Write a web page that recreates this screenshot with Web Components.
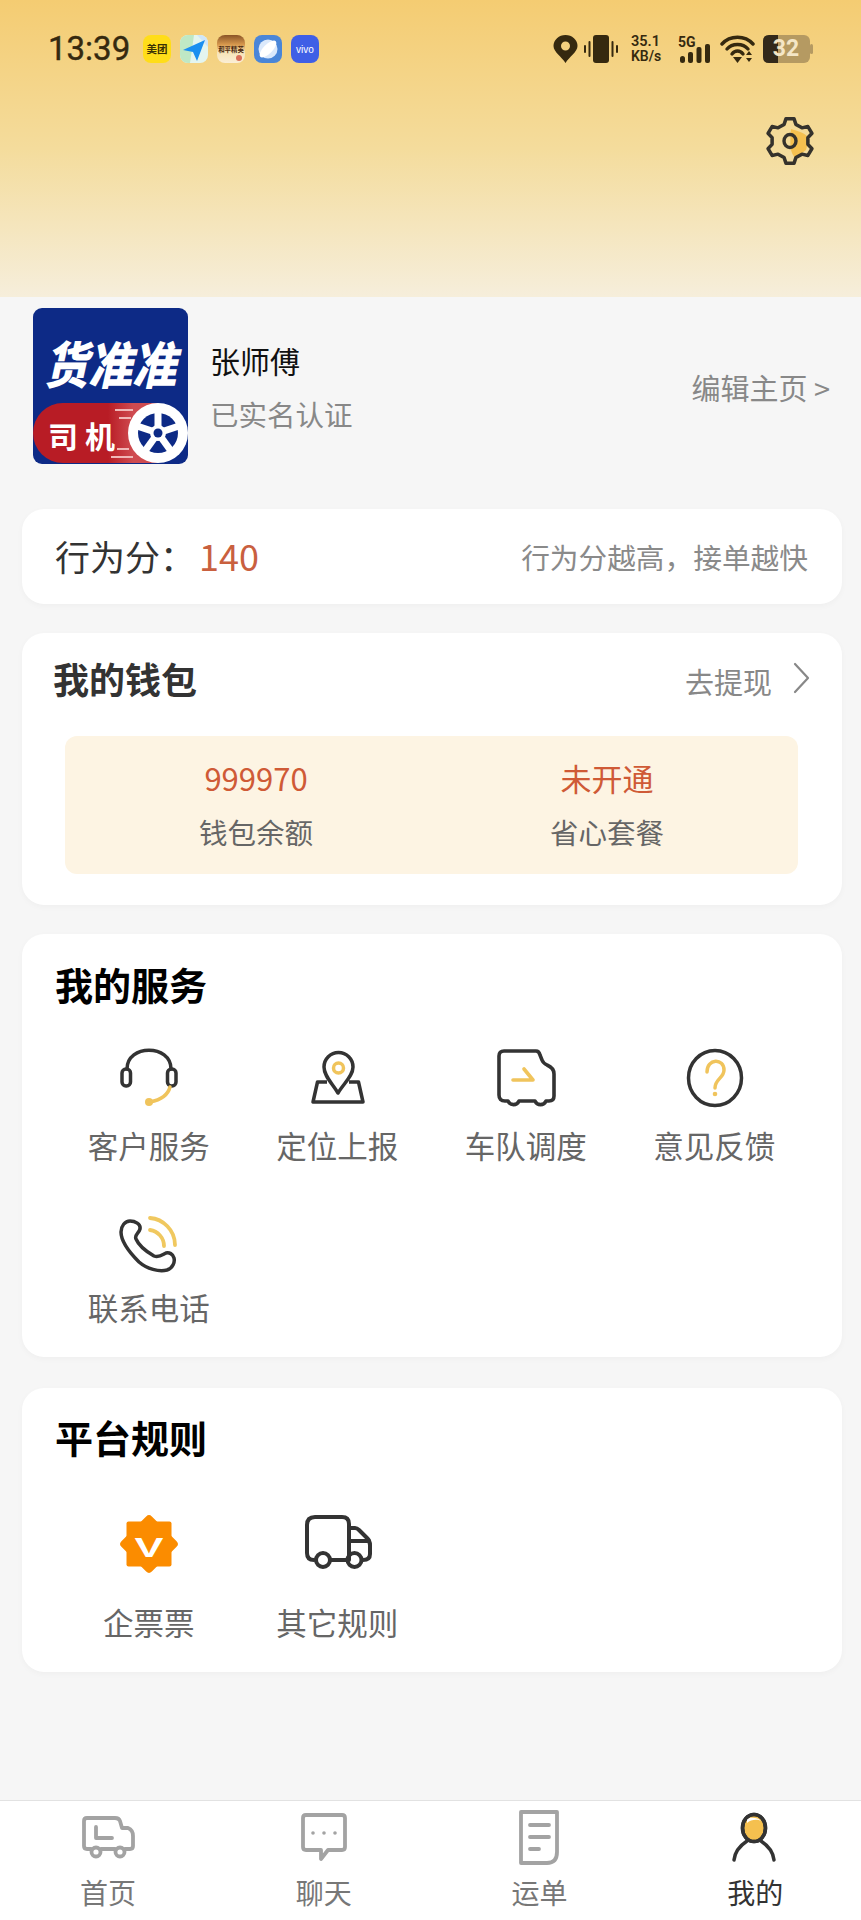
<!DOCTYPE html>
<html lang="zh-CN">
<head>
<meta charset="utf-8">
<title>我的</title>
<style>
  html, body { margin: 0; padding: 0; }
  body {
    width: 861px;
    height: 1920px;
    overflow: hidden;
    background: #f6f6f6;
    font-family: "Noto Sans CJK SC", "Noto Sans", sans-serif;
  }
</style>
</head>
<body>

<top-header></top-header>
<profile-row name="张师傅" status="已实名认证" action="编辑主页 >"></profile-row>
<score-card label="行为分：" value="140" hint="行为分越高，接单越快"></score-card>
<wallet-card></wallet-card>

<grid-card title="我的服务" class="services">
  <service-item label="客户服务">
    <svg slot="icon" width="64" height="64" viewBox="0 0 64 64" fill="none" stroke-linecap="round">
      <path d="M10 23C10 -2 54 -2 54 23" stroke="#333" stroke-width="3.500"/>
      <rect x="5" y="23" width="8.500" height="17" rx="4" stroke="#333" stroke-width="3.500"/>
      <rect x="50.500" y="23" width="8.500" height="17" rx="4" stroke="#333" stroke-width="3.500"/>
      <path d="M53 41C51 49 43 54 33 56" stroke="#f0c45c" stroke-width="3.500"/>
      <circle cx="32" cy="56" r="4" fill="#f0c45c"/>
    </svg>
  </service-item>
  <service-item label="定位上报">
    <svg slot="icon" width="64" height="64" viewBox="0 0 64 64" fill="none" stroke-linejoin="round">
      <path d="M32 47C26 37 18 30 18 21A14.500 14.500 0 0 1 47 21C47 30 38 37 32 47Z" stroke="#333" stroke-width="3.500"/>
      <circle cx="32.500" cy="22" r="5" stroke="#f0c45c" stroke-width="3.500"/>
      <path d="M21 36H11.500L7 56H57L52.500 36H43" stroke="#333" stroke-width="3.500"/>
    </svg>
  </service-item>
  <service-item label="车队调度">
    <svg slot="icon" width="64" height="64" viewBox="0 0 64 64" fill="none" stroke-linecap="round" stroke-linejoin="round">
      <path d="M10 5H42Q45 5 46 9L48 14Q49 17 53 19Q60 22 60 28V50Q60 55 55 55H52A6 6 0 0 1 41 55H25A6 6 0 0 1 14 55H11Q5 55 5 49V10Q5 5 10 5Z" stroke="#333" stroke-width="3.600"/>
      <path d="M19 34H39L30 23" stroke="#f0c45c" stroke-width="3.600"/>
    </svg>
  </service-item>
  <service-item label="意见反馈">
    <svg slot="icon" width="64" height="64" viewBox="0 0 64 64" fill="none" stroke-linecap="round">
      <ellipse cx="32" cy="32" rx="26.500" ry="27.500" stroke="#333" stroke-width="3.500"/>
      <path d="M24 26C24 12 41 12 41 24C41 32 32 33 32 42" stroke="#f0c45c" stroke-width="3.500"/>
      <circle cx="32" cy="48" r="2.300" fill="#f0c45c"/>
    </svg>
  </service-item>
  <service-item label="联系电话">
    <svg slot="icon" width="64" height="64" viewBox="0 0 64 64" fill="none" stroke-linecap="round" style="overflow:visible">
      <path d="M13 13C8 13 4 18 4 24C4 34 14 46 22 54C30 61 42 64 50 62C56 60 58 54 57 50C56 46 52 44 49 45C45 47 42 50 37 48C30 44 22 38 19 31C17 27 22 25 23 21C24 16 18 13 13 13Z" stroke="#333" stroke-width="3.500"/>
      <path d="M33 10C46 11 58 22 58 37" stroke="#f0c85f" stroke-width="3.800"/>
      <path d="M33 22C41 23 47 30 47 38" stroke="#f0c85f" stroke-width="3.800"/>
    </svg>
  </service-item>
</grid-card>

<grid-card title="平台规则" class="rules">
  <service-item label="企票票" style="--label-gap:26px">
    <svg slot="icon" width="64" height="64" viewBox="0 0 64 64">
      <g fill="#fb8c00">
        <rect x="9.500" y="9.500" width="45" height="45" rx="2"/>
        <rect x="10.500" y="10.500" width="43" height="43" rx="4" transform="rotate(45 32 32)"/>
      </g>
      <text transform="translate(32 45) scale(1.550 1)" text-anchor="middle" font-family="Liberation Sans, sans-serif" font-weight="700" font-size="28" fill="#fff">V</text>
    </svg>
  </service-item>
  <service-item label="其它规则" style="--label-gap:26px">
    <svg slot="icon" width="68" height="64" viewBox="0 0 68 64" fill="none" stroke="#333" stroke-width="4" stroke-linecap="round" stroke-linejoin="round">
      <path d="M10 48Q3 48 3 41V13Q3 5 11 5H38Q45 5 45 12V48M27 48H42"/>
      <path d="M45 16H51Q53 16 55 18L63 26Q66 29 66 33V42Q66 48 59 48"/>
      <path d="M45 29H65"/>
      <circle cx="19" cy="48" r="7"/>
      <circle cx="50.500" cy="48" r="7"/>
    </svg>
  </service-item>
</grid-card>

<bottom-nav></bottom-nav>

<script>
// Shared font stack, shadow roots don't see the page rules except through inheritance
const pageFont = '"Noto Sans CJK SC", "Noto Sans", sans-serif';

class StatusBar extends HTMLElement {
  constructor() {
    super();
    const template = document.createElement('template');
    template.innerHTML = `
      <style>
        :host { display: flex; align-items: center; height: 28px; padding: 0 48px; color: #35290f; font-family: ${pageFont}; }
        svg { display: block; flex: none; }
        .time { width: 81px; font: 400 33px/28px Roboto, "Liberation Sans", sans-serif; -webkit-text-stroke: .4px #35290f; margin-right: 14px; white-space: nowrap; }
        .apps { display: flex; gap: 9px; }
        .apps svg { border-radius: 8px; }
        .right { display: flex; align-items: center; margin-left: auto; }
        .speed { width: 33px; margin: 0 14px 0 13px; font: 600 14.500px/14px Roboto, "Liberation Sans", sans-serif; white-space: nowrap; }
        .speed div:last-child { font-size: 14px; }
        .signal { width: 34px; height: 28px; position: relative; margin-right: 8px; }
        .signal span { position: absolute; left: 0; top: 0; font: 700 14px/14px Roboto, "Liberation Sans", sans-serif; }
        .signal svg { position: absolute; left: 0; top: 0; }
        .battery { width: 50px; height: 28px; position: relative; margin-left: 8px; }
        .battery span { position: absolute; left: 8px; top: 0; width: 30px; text-align: center; font: 700 23px/28px Roboto, "Liberation Sans", sans-serif; color: #f4e6c6; }
      </style>
      <div class="time">13:39</div>
      <div class="apps">
        <svg width="28" height="28" viewBox="0 0 28 28"><rect width="28" height="28" fill="#ffdd19"/><text x="14" y="18" text-anchor="middle" font-size="10.500" font-weight="700" fill="#3b3205">美团</text></svg>
        <svg width="28" height="28" viewBox="0 0 28 28"><rect width="28" height="28" fill="#e4f5ef"/><path d="M0 0H14L10 28H0Z" fill="#bfe8c5"/><path d="M17 0H28V12Z" fill="#cfe6f8"/><path d="M25 5L3 15L13 17L17 26Z" fill="#1a8ff0"/></svg>
        <svg width="28" height="28" viewBox="0 0 28 28"><defs><linearGradient id="pg" x1="0" y1="0" x2="0" y2="1"><stop offset="0" stop-color="#8a5426"/><stop offset=".35" stop-color="#d99a4e"/><stop offset=".6" stop-color="#f6e3b6"/><stop offset="1" stop-color="#fbeed6"/></linearGradient></defs><rect width="28" height="28" fill="url(#pg)"/><text x="14" y="17" text-anchor="middle" font-size="6.400" font-weight="700" fill="#4a2a10">和平精英</text><circle cx="22" cy="23" r="3" fill="#d9705a"/></svg>
        <svg width="28" height="28" viewBox="0 0 28 28"><rect width="28" height="28" fill="#4a86d8"/><circle cx="14" cy="14" r="9.500" fill="#dbe9fb"/><ellipse cx="14" cy="14" rx="11" ry="4.500" fill="#fff" transform="rotate(-45 14 14)"/></svg>
        <svg width="28" height="28" viewBox="0 0 28 28"><rect width="28" height="28" fill="#3f5fe6"/><text x="14" y="18" text-anchor="middle" font-family="Liberation Sans, sans-serif" font-size="10" fill="#fff">vivo</text></svg>
      </div>
      <div class="right">
        <svg width="25" height="28" viewBox="0 0 25 28"><path fill-rule="evenodd" fill="#35290f" d="M12.500 28C9 22 .5 17 .5 11A12 11 0 0 1 24.500 11C24.500 17 16 22 12.500 28ZM12.500 6.500A4.500 4.500 0 1 0 12.500 15.500A4.500 4.500 0 1 0 12.500 6.500Z"/></svg>
        <svg width="34" height="28" viewBox="0 0 34 28" style="margin-left:6px" fill="#35290f"><rect x="9" y="0" width="16" height="28" rx="3"/><rect x="0" y="10" width="2" height="8" rx="1"/><rect x="4.500" y="6" width="2" height="16" rx="1"/><rect x="27.500" y="6" width="2" height="16" rx="1"/><rect x="32" y="10" width="2" height="8" rx="1"/></svg>
        <div class="speed"><div>35.1</div><div>KB/s</div></div>
        <div class="signal">
          <span>5G</span>
          <svg width="34" height="28" viewBox="0 0 34 28" fill="#35290f"><rect x="2" y="21" width="5" height="7" rx="2.500"/><rect x="10" y="17" width="5" height="11" rx="2"/><rect x="18.500" y="12" width="5" height="16" rx="2"/><rect x="27" y="9" width="5" height="19" rx="2"/></svg>
        </div>
        <svg width="35" height="28" viewBox="0 0 35 28" fill="none" stroke="#35290f" stroke-width="3.400" stroke-linecap="round"><path d="M2 9C10 0 25 0 33 9"/><path d="M7 14C12 8 23 8 28 14"/><path d="M12 19C15 15 20 15 23 19" /><path d="M13 22H22L17.500 28Z" fill="#35290f" stroke="none"/><path d="M26 20L29 16L32 20ZM26 23L29 27L32 23Z" fill="#35290f" stroke="none"/></svg>
        <div class="battery">
          <svg width="50" height="28" viewBox="0 0 50 28"><rect x="0" y="0" width="47" height="28" rx="6" fill="#b59a62"/><path d="M6 0H15V28H6Q0 28 0 22V6Q0 0 6 0Z" fill="#33291a"/><rect x="47" y="9" width="3" height="10" rx="1.500" fill="#b59a62"/></svg>
          <span>32</span>
        </div>
      </div>
    `;
    this.attachShadow({ mode: 'open' });
    this.shadowRoot.appendChild(template.content.cloneNode(true));
  }
}
customElements.define('status-bar', StatusBar);

class SettingsGear extends HTMLElement {
  constructor() {
    super();
    // six teeth, worked out instead of typed by hand
    const cx = 24, cy = 24;
    let d = '';
    for (let i = 0; i < 6; i++) {
      const a = (-90 + 60 * i) * Math.PI / 180;
      const pts = [[17.500, -19], [22.500, -10], [22.500, 10], [17.500, 19]];
      pts.forEach((p, j) => {
        const t = a + p[1] * Math.PI / 180;
        d += ((i === 0 && j === 0) ? 'M' : 'L') + (cx + p[0] * Math.cos(t)).toFixed(1) + ' ' + (cy + p[0] * Math.sin(t)).toFixed(1);
      });
    }
    d += 'Z';
    this.attachShadow({ mode: 'open' }).innerHTML = `
      <style>
        :host { display: block; width: 48px; height: 48px; }
        svg { display: block; overflow: visible; }
      </style>
      <svg width="48" height="48" viewBox="0 0 48 48" fill="none">
        <path d="M25 12C31 14 41 16 43 22L40 33L29 41C26 36 23 34 25 12Z" fill="#f5c04f"/>
        <path d="${d}" transform="translate(24 24) scale(1.040 1) translate(-24 -24)" stroke="#35322c" stroke-width="3.400" stroke-linejoin="round"/>
        <ellipse cx="24" cy="24" rx="6" ry="6.500" stroke="#35322c" stroke-width="3.400"/>
      </svg>
    `;
  }
}
customElements.define('settings-gear', SettingsGear);

class TopHeader extends HTMLElement {
  constructor() {
    super();
    this.attachShadow({ mode: 'open' }).innerHTML = `
      <style>
        :host { display: block; height: 297px; padding-top: 35px; box-sizing: border-box; background: linear-gradient(#f4cc72, #f4dc9c 50%, #f6eedb); }
        .tools { display: flex; justify-content: flex-end; padding: 54px 47px 0 0; }
      </style>
      <status-bar></status-bar>
      <div class="tools"><settings-gear></settings-gear></div>
    `;
  }
}
customElements.define('top-header', TopHeader);

class ProfileRow extends HTMLElement {
  connectedCallback() {
    this.attachShadow({ mode: 'open' }).innerHTML = `
      <style>
        :host { display: flex; align-items: center; margin-top: 11px; padding: 0 31px 0 33px; height: 156px; font-family: ${pageFont}; }
        svg { display: block; flex: none; }
        .who { margin-left: 22px; align-self: flex-start; padding-top: 30px; }
        .name { font-size: 30px; line-height: 44px; color: #111; }
        .status { font-size: 28.500px; line-height: 40px; color: #888; margin-top: 12px; }
        .action { margin-left: auto; margin-top: 2px; font-size: 29px; line-height: 40px; color: #888; }
      </style>
      <svg width="155" height="156" viewBox="0 0 155 156">
        <defs>
          <clipPath id="round"><rect width="155" height="156" rx="9"/></clipPath>
          <linearGradient id="fade" x1="0" y1="0" x2="1" y2="0"><stop offset=".6" stop-color="#b81c25"/><stop offset=".8" stop-color="#cf4b50"/></linearGradient>
        </defs>
        <g clip-path="url(#round)">
          <rect width="155" height="156" fill="#0d2a86"/>
          <path d="M30 95H125V155H30A30 30 0 0 1 30 95Z" fill="url(#fade)"/>
          <g stroke="#f0b7b7" stroke-width="2"><path d="M82 102H100"/><path d="M86 110H98"/><path d="M84 141H96"/><path d="M78 149H100"/></g>
          <circle cx="125" cy="125" r="30" fill="#fff"/>
          <circle cx="125" cy="125" r="20" fill="#0d2a86"/>
          <g stroke="#fff" stroke-width="7">
            <path d="M125 125V103"/><path d="M125 125L146 118"/><path d="M125 125L138 143"/><path d="M125 125L112 143"/><path d="M125 125L104 118"/>
          </g>
          <circle cx="125" cy="125" r="8" fill="#fff"/>
          <circle cx="125" cy="125" r="4.500" fill="#0d2a86"/>
        </g>
        <text transform="translate(11 76) scale(1 1.150)" font-style="italic" font-size="44" font-weight="900" fill="#fff">货准准</text>
        <text x="15" y="140" font-size="30" font-weight="700" letter-spacing="7" fill="#fff">司机</text>
      </svg>
      <div class="who">
        <div class="name">${this.getAttribute('name')}</div>
        <div class="status">${this.getAttribute('status')}</div>
      </div>
      <div class="action">${this.getAttribute('action').replace('>', '&gt;')}</div>
    `;
  }
}
customElements.define('profile-row', ProfileRow);

class ScoreCard extends HTMLElement {
  connectedCallback() {
    this.attachShadow({ mode: 'open' }).innerHTML = `
      <style>
        :host { display: flex; align-items: center; box-sizing: border-box; width: 820px; height: 95px; margin: 45px 0 0 22px; padding: 0 34px 2px 33px; background: #fff; border-radius: 22px; box-shadow: 0 2px 6px rgba(0,0,0,.03); font-family: ${pageFont}; }
        .label { font-size: 35px; color: #333; width: 144px; white-space: nowrap; }
        .value { font-size: 36px; color: #c9603f; margin-bottom: 2px; }
        .hint { margin-left: auto; margin-top: 2px; font-size: 28.700px; color: #8a8a8a; white-space: nowrap; }
      </style>
      <span class="label">${this.getAttribute('label')}</span>
      <span class="value">${this.getAttribute('value')}</span>
      <span class="hint">${this.getAttribute('hint')}</span>
    `;
  }
}
customElements.define('score-card', ScoreCard);

class WalletCard extends HTMLElement {
  constructor() {
    super();
    this.attachShadow({ mode: 'open' }).innerHTML = `
      <style>
        :host { display: block; box-sizing: border-box; width: 820px; height: 272px; margin: 29px 0 0 22px; background: #fff; border-radius: 22px; box-shadow: 0 2px 6px rgba(0,0,0,.03); font-family: ${pageFont}; }
        .head { display: flex; align-items: center; height: 94px; padding: 0 32px 0 31px; }
        .title { font-size: 36px; font-weight: 700; color: #333; margin-top: -4px; }
        .link { margin-left: auto; margin-top: 2px; font-size: 29px; color: #888; }
        svg { display: block; margin-left: 21px; margin-top: -4px; }
        .box { display: grid; grid-template-columns: 382px 320px; height: 138px; margin: 9px 44px 0 43px; padding-top: 18px; box-sizing: border-box; background: #fdf4e3; border-radius: 12px; text-align: center; }
        .val { font-size: 31px; line-height: 48px; color: #cf5a36; }
        .cap { font-size: 28.500px; line-height: 40px; margin-top: 10px; color: #666; }
      </style>
      <div class="head">
        <span class="title">我的钱包</span>
        <span class="link">去提现</span>
        <svg width="17" height="32" viewBox="0 0 17 32" fill="none" stroke="#888" stroke-width="2.200" stroke-linecap="round" stroke-linejoin="round"><path d="M2 2L15 16L2 30"/></svg>
      </div>
      <div class="box">
        <div class="col"><div class="val">999970</div><div class="cap">钱包余额</div></div>
        <div class="col"><div class="val">未开通</div><div class="cap">省心套餐</div></div>
      </div>
    `;
  }
}
customElements.define('wallet-card', WalletCard);

class GridCard extends HTMLElement {
  connectedCallback() {
    const rules = this.classList.contains('rules');
    this.attachShadow({ mode: 'open' }).innerHTML = `
      <style>
        :host { display: block; box-sizing: border-box; width: 820px; margin: ${rules ? 31 : 29}px 0 0 22px; padding: ${rules ? 25 : 26}px 33px 0; height: ${rules ? 284 : 423}px; background: #fff; border-radius: 22px; box-shadow: 0 2px 6px rgba(0,0,0,.03); font-family: ${pageFont}; }
        .title { font-size: 38px; line-height: 48px; font-weight: 700; color: #000; margin-bottom: ${rules ? 51 : 38}px; }
        .items { display: grid; grid-template-columns: repeat(4, 188.500px); grid-auto-rows: 162px; }
      </style>
      <div class="title">${this.getAttribute('title')}</div>
      <div class="items"><slot></slot></div>
    `;
  }
}
customElements.define('grid-card', GridCard);

class ServiceItem extends HTMLElement {
  connectedCallback() {
    this.attachShadow({ mode: 'open' }).innerHTML = `
      <style>
        :host { display: flex; flex-direction: column; align-items: center; }
        .icon { display: flex; justify-content: center; height: 64px; }
        .label { margin-top: var(--label-gap, 15px); margin-right: 1px; font-size: 30.500px; line-height: 40px; color: #666; white-space: nowrap; }
      </style>
      <div class="icon"><slot name="icon"></slot></div>
      <div class="label">${this.getAttribute('label')}</div>
    `;
  }
}
customElements.define('service-item', ServiceItem);

class NavItem extends HTMLElement {
  connectedCallback() {
    const active = this.hasAttribute('active');
    this.attachShadow({ mode: 'open' }).innerHTML = `
      <style>
        :host { display: flex; flex-direction: column; align-items: center; }
        .icon { height: 58px; ${active ? '' : 'filter: blur(.7px);'} }
        .label { margin-top: 6px; font-size: 28px; line-height: 40px; color: ${active ? '#333' : '#777'}; }
      </style>
      <div class="icon"><slot name="icon"></slot></div>
      <div class="label">${this.getAttribute('label')}</div>
    `;
  }
}
customElements.define('nav-item', NavItem);

class BottomNav extends HTMLElement {
  constructor() {
    super();
    this.attachShadow({ mode: 'open' }).innerHTML = `
      <style>
        :host { position: fixed; left: 0; right: 0; bottom: 0; display: grid; grid-template-columns: repeat(4, 215.800px); box-sizing: border-box; height: 120px; padding-top: 7px; background: #fff; border-top: 1px solid #e2e2e2; overflow: hidden; font-family: ${pageFont}; }
      </style>
      <nav-item label="首页">
        <svg slot="icon" width="64" height="58" viewBox="0 0 64 58" fill="none" stroke="#a3a3a3" stroke-width="3.800" stroke-linejoin="round" stroke-linecap="round">
          <path d="M15 41H11Q8 41 8 38V13Q8 10 11 10H39Q43 10 44 13L46 20H52Q57 22 57 28V38Q57 41 54 41H49M25 41H39"/>
          <circle cx="20" cy="44" r="4.500"/><circle cx="44" cy="44" r="4.500"/>
          <path d="M20 19V30H36"/>
        </svg>
      </nav-item>
      <nav-item label="聊天">
        <svg slot="icon" width="64" height="58" viewBox="0 0 64 58" fill="none" stroke="#a3a3a3" stroke-width="3.800" stroke-linejoin="round">
          <path d="M14 7H50Q53 7 53 10V39Q53 42 50 42H36L29 51V42H14Q11 42 11 39V10Q11 7 14 7Z"/>
          <g fill="#a3a3a3" stroke="none"><circle cx="21" cy="25" r="1.800"/><circle cx="32" cy="25" r="1.800"/><circle cx="43" cy="25" r="1.800"/></g>
        </svg>
      </nav-item>
      <nav-item label="运单">
        <svg slot="icon" width="64" height="58" viewBox="0 0 64 58" fill="none" stroke="#a3a3a3" stroke-width="3.800" stroke-linejoin="round" stroke-linecap="round">
          <path d="M14 4H50V44Q50 55 40 55H14Z"/>
          <path d="M23 17H42M23 29H42M23 41H32"/>
        </svg>
      </nav-item>
      <nav-item label="我的" active>
        <svg slot="icon" width="64" height="58" viewBox="0 0 64 58" fill="none" stroke="#333" stroke-width="3.500" stroke-linecap="round" style="margin-right:3px">
          <ellipse cx="32" cy="20" rx="11.500" ry="13.500" fill="#f5c04f"/>
          <path d="M25 11C28 9 36 9 39 13C36 11 29 11 25 15Z" fill="#fff" stroke="none"/>
          <ellipse cx="32" cy="20" rx="11.500" ry="13.500"/>
          <path d="M12 52C13 42 19 37 25 33M52 52C51 42 45 37 39 33"/>
        </svg>
      </nav-item>
    `;
  }
}
customElements.define('bottom-nav', BottomNav);
</script>
</body>
</html>
